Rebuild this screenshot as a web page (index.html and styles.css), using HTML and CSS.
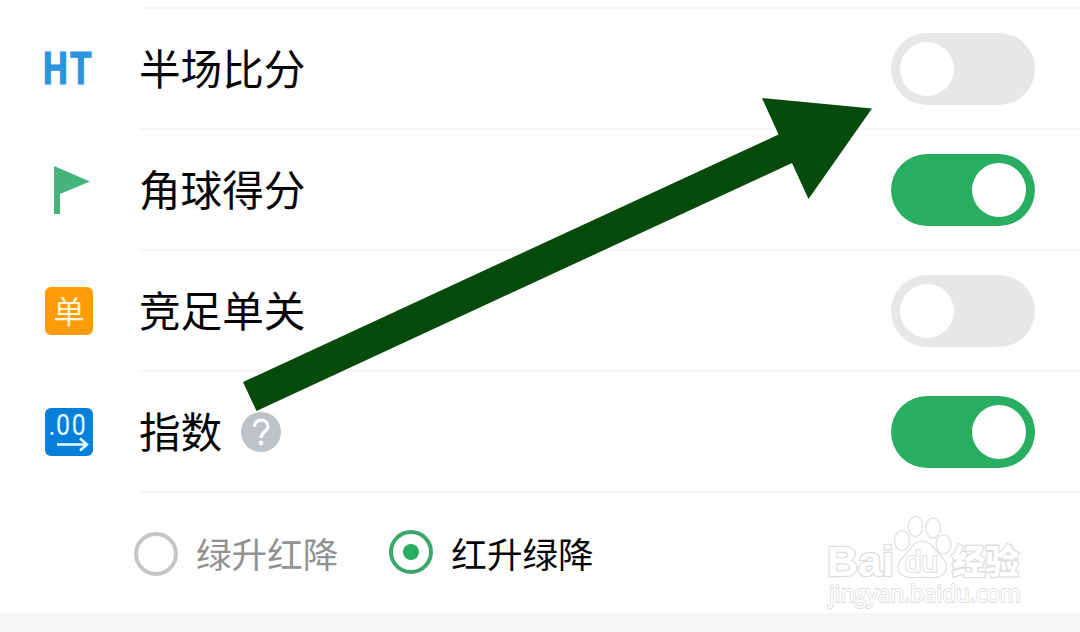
FILE: index.html
```html
<!DOCTYPE html>
<html lang="zh-CN">
<head>
<meta charset="utf-8">
<title>比分设置</title>
<link rel="stylesheet" href="styles.css">
</head>
<body>
<main class="settings">
  <section class="row">
    <svg class="icon" viewBox="0 0 48 48"><text class="ht" transform="translate(-1.500 40) scale(.78 1)" x="-.5 34">HT</text></svg>
    <div class="line"><span class="label">半场比分</span><span class="toggle"></span></div>
  </section>
  <section class="row">
    <svg class="icon" viewBox="0 0 48 48"><path d="M9 0L45 15.500L15 28V48H9Z" fill="#45b57c"/></svg>
    <div class="line"><span class="label">角球得分</span><span class="toggle on"></span></div>
  </section>
  <section class="row">
    <svg class="icon" viewBox="0 0 48 48"><rect width="48" height="48" rx="6" fill="#ff9c08"/><text class="single" x="24" y="35.500" text-anchor="middle">单</text></svg>
    <div class="line"><span class="label">竞足单关</span><span class="toggle"></span></div>
  </section>
  <section class="row">
    <svg class="icon" viewBox="0 0 48 48"><rect width="48" height="48" rx="6" fill="#0880d9"/><text class="odds" transform="translate(0 27) scale(.86 1)" x="4.500 12.800 31">.00</text><path d="M12 36.500H42M35 30.500L42 36.500L35 42.500" fill="none" stroke="#e4ffff" stroke-width="2.500"/></svg>
    <div class="line"><span class="label">指数</span>
      <svg class="help" viewBox="0 0 40 40"><circle cx="20" cy="20" r="20" fill="#bdc3c7"/><path d="M13.500 14.500C13.500 6 27 6 27 14.500C27 19.500 20 19.500 20 26" fill="none" stroke="#fff" stroke-width="3.200"/><circle cx="20" cy="31" r="2.400" fill="#fff"/></svg>
      <span class="toggle on"></span></div>
  </section>
  <section class="choices">
    <span class="radio"></span><span class="choice">绿升红降</span>
    <span class="radio selected"></span><span class="choice active">红升绿降</span>
  </section>
</main>
<svg class="overlay" viewBox="0 0 1080 632">
  <path d="M243 382L778.500 134.500L762 98L872 108.500L808.500 199L792 163L256.500 411Z" fill="#064b0c"/>
  <g class="mark">
    <text class="bai" x="827" y="576" textLength="67" lengthAdjust="spacingAndGlyphs">Bai</text>
    <ellipse cx="902" cy="540.500" rx="7.500" ry="10"/>
    <ellipse cx="915.500" cy="526.500" rx="7.300" ry="10"/>
    <ellipse cx="933" cy="528" rx="7.500" ry="9.800"/>
    <ellipse cx="943.500" cy="544.500" rx="7.500" ry="9.500"/>
    <path d="M922 541C914 541 911 549 906 554C900 559 898 563 898 568C899 577 908 579 922 577C937 579 945 577 946.500 568C947 562 943 558 939 554C934 549 931 541 922 541Z"/>
    <text class="du" x="905" y="572" textLength="33" lengthAdjust="spacingAndGlyphs">du</text>
    <text class="jingyan" x="952" y="574" textLength="67" lengthAdjust="spacingAndGlyphs">经验</text>
    <text class="url" x="829" y="602" textLength="192" lengthAdjust="spacingAndGlyphs">jingyan.baidu.com</text>
  </g>
</svg>
</body>
</html>
```
FILE: styles.css
```css
body {
  margin: 0;
  width: 1080px;
  height: 632px;
  overflow: hidden;
  background: #f7f7f7;
  font-family: "Noto Sans CJK SC", sans-serif;
}
.settings {
  box-sizing: border-box;
  height: 613px;
  padding-top: 7px;
  background: #fefefe;
}
.row {
  display: flex;
  align-items: center;
  height: 121px;
  padding-left: 45px;
}
.row:first-child { height: 123px; }
.row:first-child .line { border-top: 2px solid #f6f6f6; }
.icon {
  width: 48px;
  height: 48px;
  margin-top: -2px;
  overflow: visible;
}
.line {
  box-sizing: border-box;
  display: flex;
  align-items: center;
  flex: 1;
  height: 100%;
  margin-left: 46px;
  padding-right: 45px;
  border-bottom: 2px solid #f6f6f6;
}
.label {
  padding-bottom: 3px;
  font-size: 41.600px;
  line-height: 60px;
  color: #050505;
}
.help {
  width: 40px;
  height: 40px;
  margin-left: 19px;
}
.toggle {
  box-sizing: border-box;
  display: flex;
  width: 144px;
  height: 72px;
  margin-left: auto;
  padding: 9px;
  border-radius: 36px;
  background: #e7e7e7;
}
.toggle::before {
  content: "";
  width: 54px;
  height: 54px;
  border-radius: 50%;
  background: #fff;
}
.toggle.on {
  justify-content: flex-end;
  background: #29ae61;
}
.choices {
  display: flex;
  align-items: center;
  height: 120px;
  padding-left: 134px;
}
.radio {
  box-sizing: border-box;
  display: flex;
  align-items: center;
  justify-content: center;
  width: 44px;
  height: 44px;
  margin-top: 2px;
  border: 4px solid #c5c5c5;
  border-radius: 50%;
}
.radio.selected {
  margin: -2px 0 0 51px;
  border-color: #3da66b;
}
.radio.selected::before {
  content: "";
  width: 16px;
  height: 16px;
  border-radius: 50%;
  background: #29ae61;
}
.choice {
  margin-left: 18px;
  padding-bottom: 2px;
  font-size: 35.600px;
  color: #929292;
}
.choice.active { color: #050505; }
.overlay {
  position: absolute;
  top: 0;
  left: 0;
  width: 1080px;
  height: 632px;
  pointer-events: none;
}
.ht {
  font: 700 45px Roboto, sans-serif;
  fill: #2a94df;
  stroke: #2a94df;
  stroke-width: 1.200px;
}
.single {
  font-size: 31px;
  fill: #fff5d8;
}
.odds {
  font: 400 29px Roboto, sans-serif;
  fill: #e4ffff;
}
.mark {
  fill: #fff;
  stroke: #dedede;
  stroke-width: 1.200px;
}
.mark text {
  paint-order: stroke;
  stroke-width: 2.600px;
}
.mark .bai { font: 700 43px "Liberation Sans", sans-serif; }
.mark .du {
  font: 400 29px "Liberation Sans", sans-serif;
  stroke-width: 2px;
}
.mark .jingyan { font: 900 34px "Noto Sans CJK SC", sans-serif; }
.mark .url {
  font: 400 24px "Open Sans", sans-serif;
  stroke-width: 1.800px;
}
```
